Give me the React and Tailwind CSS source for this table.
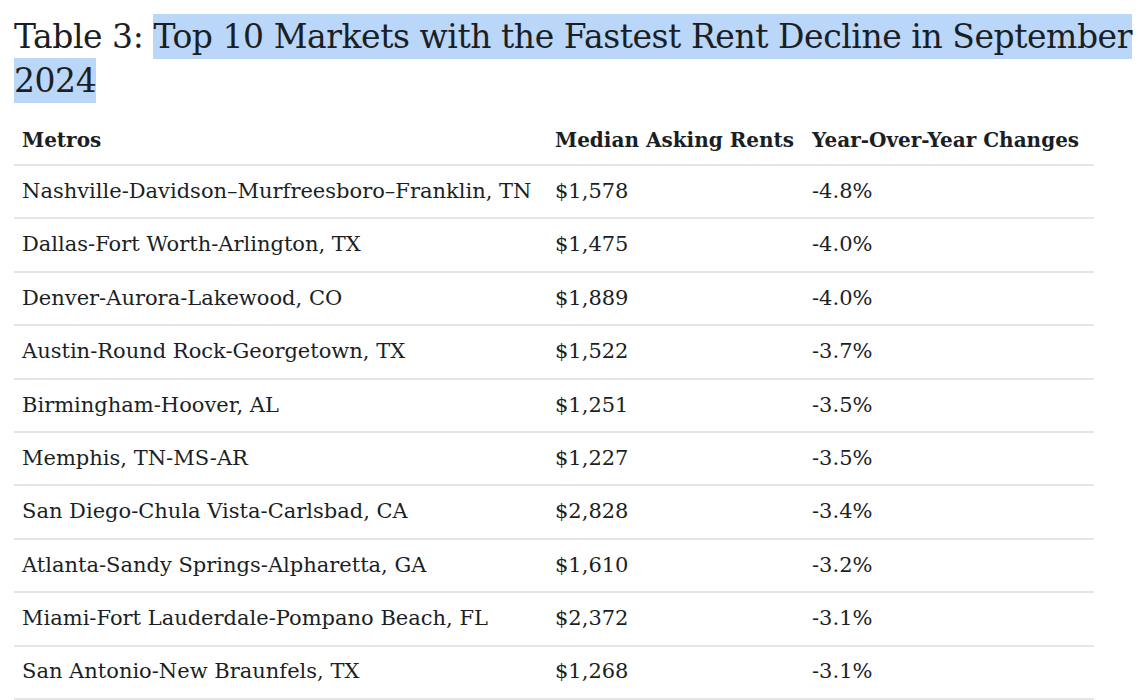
import React from "react";

const rows = [
  ["Nashville-Davidson–Murfreesboro–Franklin, TN", "$1,578", "-4.8%"],
  ["Dallas-Fort Worth-Arlington, TX", "$1,475", "-4.0%"],
  ["Denver-Aurora-Lakewood, CO", "$1,889", "-4.0%"],
  ["Austin-Round Rock-Georgetown, TX", "$1,522", "-3.7%"],
  ["Birmingham-Hoover, AL", "$1,251", "-3.5%"],
  ["Memphis, TN-MS-AR", "$1,227", "-3.5%"],
  ["San Diego-Chula Vista-Carlsbad, CA", "$2,828", "-3.4%"],
  ["Atlanta-Sandy Springs-Alpharetta, GA", "$1,610", "-3.2%"],
  ["Miami-Fort Lauderdale-Pompano Beach, FL", "$2,372", "-3.1%"],
  ["San Antonio-New Braunfels, TX", "$1,268", "-3.1%"],
];

function App() {
  return (
    <div className="bg-white w-[1141px] h-[700px] overflow-hidden text-[#1b1f24] font-['DejaVu_Serif',serif]">
      {/* Title */}
      <h1 className="pl-[14px] pt-[15px] text-[33px] leading-[44px] font-normal tracking-[-0.45px]">
        <div className="whitespace-nowrap">
          Table 3:{" "}
          <span className="bg-[#bad6f9] py-[3px]">Top 10 Markets with the Fastest Rent Decline in September</span>
        </div>
        <div>
          <span className="bg-[#bad6f9] py-[3px]">2024</span>
        </div>
      </h1>

      {/* Table */}
      <div className="ml-[14px] mt-[12px] w-[1080px]">
        <div className="flex items-center h-[51px] border-b-2 border-[#e6e6e6] text-[20px] font-bold">
          <div className="w-[533px] pl-[8px]">Metros</div>
          <div className="w-[257px] pl-[8px]">Median Asking Rents</div>
          <div className="flex-1 pl-[8px]">Year-Over-Year Changes</div>
        </div>
        {rows.map((r) => (
          <div
            key={r[0]}
            className="flex items-center h-[53.4px] border-b-2 border-[#e6e6e6] text-[21px]"
          >
            <div className="w-[533px] pl-[8px] whitespace-nowrap">{r[0]}</div>
            <div className="w-[257px] pl-[8px]">{r[1]}</div>
            <div className="flex-1 pl-[8px]">{r[2]}</div>
          </div>
        ))}
      </div>
    </div>
  );
}

export default App;
